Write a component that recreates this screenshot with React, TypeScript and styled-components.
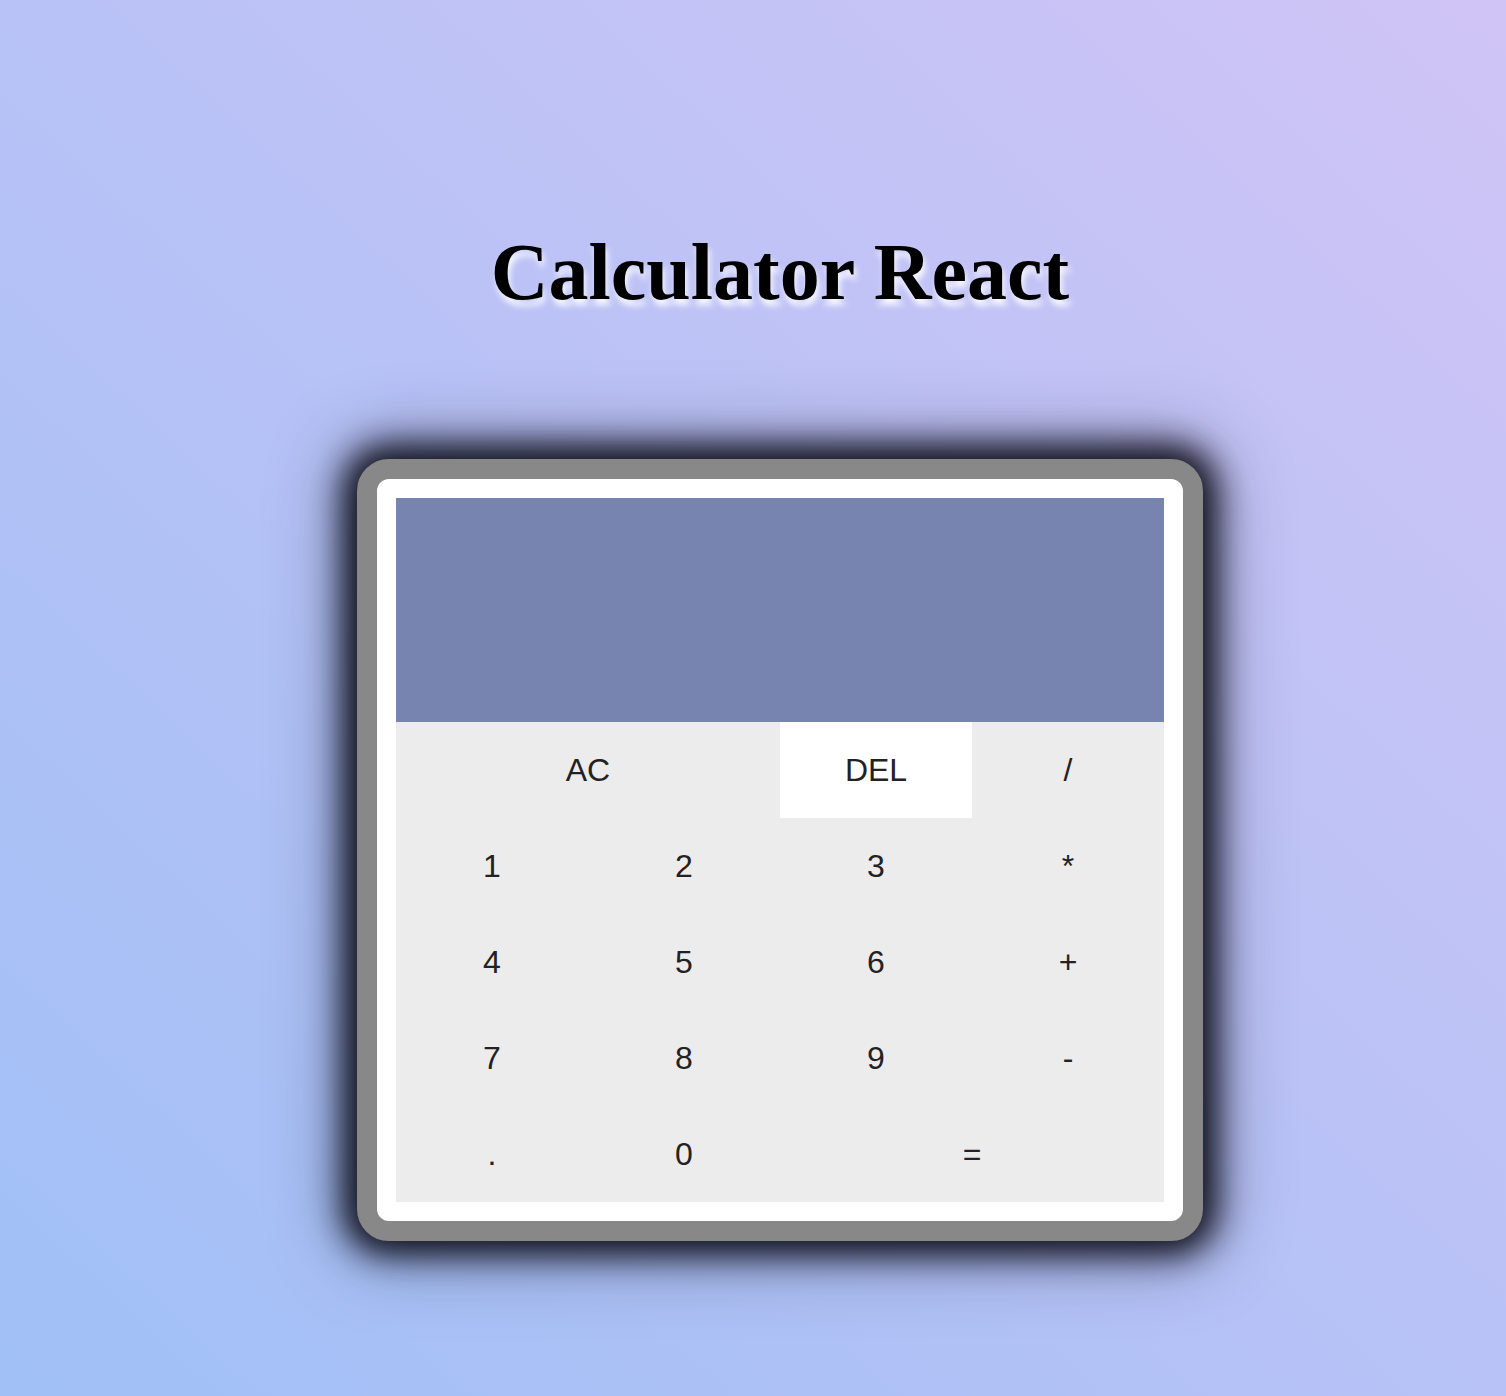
import React from "react";
import styled, { createGlobalStyle } from "styled-components";

const Global = createGlobalStyle`
  html, body { margin: 0; padding: 0; }
  body {
    min-height: 100vh;
    background: linear-gradient(to top right, #a0c0f6, #d0c4f6);
    font-family: "Liberation Sans", Arial, sans-serif;
  }
`;

const Page = styled.div`
  min-height: 100vh;
  box-sizing: border-box;
  padding: 227px 0 0 54px;
  display: flex;
  flex-direction: column;
  align-items: center;
`;

const Title = styled.h1`
  margin: 0;
  font-family: "Liberation Serif", "Times New Roman", serif;
  font-weight: bold;
  font-size: 80px;
  line-height: normal;
  color: #000;
  text-shadow: 2px 6px 6px rgba(255, 255, 255, 0.9);
`;

const Frame = styled.div`
  margin-top: 141px;
  border: 20px solid #888888;
  border-radius: 32px;
  background: #ffffff;
  padding: 19px;
  box-shadow: 0 0 32px 14px rgba(10, 10, 20, 0.95),
    0 0 70px 20px rgba(20, 20, 40, 0.35);
`;

const Calc = styled.div`
  display: grid;
  grid-template-columns: repeat(4, 192px);
  grid-template-rows: 224px repeat(5, 96px);
  background: #ececec;
`;

const Display = styled.div`
  grid-column: 1 / -1;
  background: #7884b0;
`;

const Key = styled.button<{ $span?: number; $active?: boolean }>`
  grid-column: span ${(p) => p.$span ?? 1};
  border: none;
  margin: 0;
  padding: 0;
  background: ${(p) => (p.$active ? "#ffffff" : "#ececec")};
  font-family: "Liberation Sans", Arial, sans-serif;
  font-size: 32px;
  color: #222222;
  cursor: pointer;
  display: flex;
  align-items: center;
  justify-content: center;
`;

const keys: { label: string; span?: number; active?: boolean }[] = [
  { label: "AC", span: 2 },
  { label: "DEL", active: true },
  { label: "/" },
  { label: "1" },
  { label: "2" },
  { label: "3" },
  { label: "*" },
  { label: "4" },
  { label: "5" },
  { label: "6" },
  { label: "+" },
  { label: "7" },
  { label: "8" },
  { label: "9" },
  { label: "-" },
  { label: "." },
  { label: "0" },
  { label: "=", span: 2 },
];

export default function App() {
  return (
    <>
      <Global />
      <Page>
        <Title>Calculator React</Title>
        <Frame>
          <Calc>
            <Display />
            {keys.map((k) => (
              <Key key={k.label} $span={k.span} $active={k.active}>
                {k.label}
              </Key>
            ))}
          </Calc>
        </Frame>
      </Page>
    </>
  );
}
